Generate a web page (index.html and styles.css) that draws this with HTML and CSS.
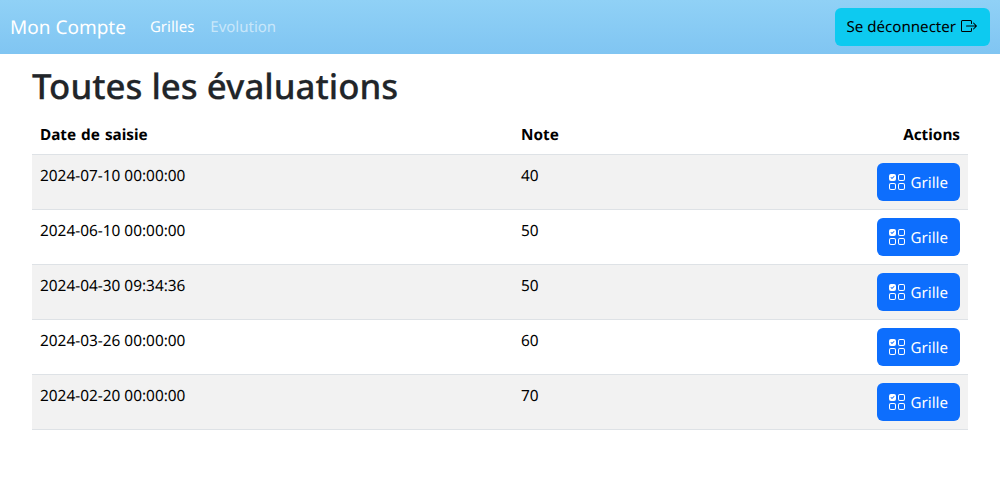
FILE: index.html
```html
<!DOCTYPE html>
<html lang="fr">
<head>
    <meta charset="UTF-8">
    <meta name="viewport" content="width=device-width, initial-scale=1.0">
    <title>Mon Compte</title>
    <link rel="stylesheet" href="styles.css">
</head>
<body>
    <svg class="sprite">
        <symbol id="ui-checks-grid" viewBox="0 0 16 16">
            <path d="M2 10h3a1 1 0 0 1 1 1v3a1 1 0 0 1-1 1H2a1 1 0 0 1-1-1v-3a1 1 0 0 1 1-1zm9-9h3a1 1 0 0 1 1 1v3a1 1 0 0 1-1 1h-3a1 1 0 0 1-1-1V2a1 1 0 0 1 1-1zm0 9a1 1 0 0 0-1 1v3a1 1 0 0 0 1 1h3a1 1 0 0 0 1-1v-3a1 1 0 0 0-1-1h-3zm0-10a2 2 0 0 0-2 2v3a2 2 0 0 0 2 2h3a2 2 0 0 0 2-2V2a2 2 0 0 0-2-2h-3zM2 9a2 2 0 0 0-2 2v3a2 2 0 0 0 2 2h3a2 2 0 0 0 2-2v-3a2 2 0 0 0-2-2H2zm7 2a2 2 0 0 1 2-2h3a2 2 0 0 1 2 2v3a2 2 0 0 1-2 2h-3a2 2 0 0 1-2-2v-3zM0 2a2 2 0 0 1 2-2h3a2 2 0 0 1 2 2v3a2 2 0 0 1-2 2H2a2 2 0 0 1-2-2V2zm5.354.854a.5.5 0 1 0-.708-.708L3 3.793l-.646-.647a.5.5 0 1 0-.708.708l1 1a.5.5 0 0 0 .708 0l2-2z"/>
        </symbol>
        <symbol id="box-arrow-right" viewBox="0 0 16 16">
            <path fill-rule="evenodd" d="M10 12.5a.5.5 0 0 1-.5.5h-8a.5.5 0 0 1-.5-.5v-9a.5.5 0 0 1 .5-.5h8a.5.5 0 0 1 .5.5v2a.5.5 0 0 0 1 0v-2A1.5 1.5 0 0 0 9.5 2h-8A1.5 1.5 0 0 0 0 3.5v9A1.5 1.5 0 0 0 1.5 14h8a1.5 1.5 0 0 0 1.5-1.5v-2a.5.5 0 0 0-1 0v2z"/>
            <path fill-rule="evenodd" d="M15.854 8.354a.5.5 0 0 0 0-.708l-3-3a.5.5 0 0 0-.708.708L14.293 7.5H5.5a.5.5 0 0 0 0 1h8.793l-2.147 2.146a.5.5 0 0 0 .708.708l3-3z"/>
        </symbol>
    </svg>

    <nav class="navbar">
        <a class="brand" href="#">Mon Compte</a>
        <ul class="nav-links">
            <li><a class="active" href="#">Grilles</a></li>
            <li><a href="#">Evolution</a></li>
        </ul>
        <button class="btn btn-logout">Se déconnecter <svg class="icon"><use href="#box-arrow-right"/></svg></button>
    </nav>

    <div class="container">
        <h1>Toutes les évaluations</h1>
        <table class="table">
            <thead>
                <tr>
                    <th class="col-date">Date de saisie</th>
                    <th>Note</th>
                    <th class="col-actions">Actions</th>
                </tr>
            </thead>
            <tbody>
                <tr>
                    <td>2024-07-10 00:00:00</td>
                    <td>40</td>
                    <td class="col-actions"><button class="btn btn-grid"><svg class="icon"><use href="#ui-checks-grid"/></svg> Grille</button></td>
                </tr>
                <tr>
                    <td>2024-06-10 00:00:00</td>
                    <td>50</td>
                    <td class="col-actions"><button class="btn btn-grid"><svg class="icon"><use href="#ui-checks-grid"/></svg> Grille</button></td>
                </tr>
                <tr>
                    <td>2024-04-30 09:34:36</td>
                    <td>50</td>
                    <td class="col-actions"><button class="btn btn-grid"><svg class="icon"><use href="#ui-checks-grid"/></svg> Grille</button></td>
                </tr>
                <tr>
                    <td>2024-03-26 00:00:00</td>
                    <td>60</td>
                    <td class="col-actions"><button class="btn btn-grid"><svg class="icon"><use href="#ui-checks-grid"/></svg> Grille</button></td>
                </tr>
                <tr>
                    <td>2024-02-20 00:00:00</td>
                    <td>70</td>
                    <td class="col-actions"><button class="btn btn-grid"><svg class="icon"><use href="#ui-checks-grid"/></svg> Grille</button></td>
                </tr>
            </tbody>
        </table>
    </div>
</body>
</html>
```

FILE: styles.css
```css
/* Basic body styling */
body {
    margin: 0;
    font-family: 'Noto Sans', sans-serif;
    font-size: 15.4px;
    line-height: 24px;
    text-rendering: geometricPrecision;
    color: #212529;
    background-color: #fff;
}

.sprite {
    display: none;
}

.navbar {
    display: flex;
    align-items: center;
    height: 54px;
    padding: 0 10px;
    background: linear-gradient(#90d1f6, #80c5f2);
}

.brand {
    margin-right: 24px;
    font-size: 19px;
    color: #fff;
    text-decoration: none;
}

.nav-links {
    display: flex;
    gap: 16px;
    margin: 0 0 1px;
    padding: 0;
    list-style: none;
    flex: 1;
    font-size: 15px;
}

.nav-links a {
    color: rgba(255, 255, 255, 0.55);
    text-decoration: none;
}

.nav-links a.active {
    color: #fff;
}

.btn {
    height: 38px;
    padding: 0 12px;
    border: none;
    border-radius: 6px;
    font-family: inherit;
    font-size: 15.1px;
    text-rendering: geometricPrecision;
    white-space: nowrap;
    cursor: pointer;
}

.btn-logout {
    background-color: #0dcaf0;
    color: #000;
}

.btn-grid {
    padding-top: 2px;
    background-color: #0d6efd;
    color: #fff;
}

.icon {
    width: 16px;
    height: 16px;
    margin: 0 1px;
    vertical-align: -2px;
    fill: currentColor;
}

.btn-grid .icon {
    margin: 0 2px 0 0;
}

.container {
    padding: 0 32px;
}

h1 {
    margin: 11px 0 6px;
    font-size: 34.8px;
    font-weight: 500;
    line-height: 43px;
    -webkit-text-stroke: 0.25px #212529;
    color: #212529;
}

.table {
    width: 100%;
    border-collapse: collapse;
    color: #000;
}

.table th {
    padding: 9px 8px 7px;
    font-size: 15.3px;
    word-spacing: 1px;
    text-align: left;
    font-weight: 700;
}

.table td {
    padding: 9px 8px 7px;
    vertical-align: top;
}

.table td.col-actions {
    padding: 8px;
}

.table tr {
    border-bottom: 1px solid #dee2e6;
}

.table tbody tr:nth-child(odd) {
    background-color: #f2f2f2;
}

.table .col-actions {
    text-align: right;
}

.col-date {
    width: 481px;
    box-sizing: border-box;
}
```
